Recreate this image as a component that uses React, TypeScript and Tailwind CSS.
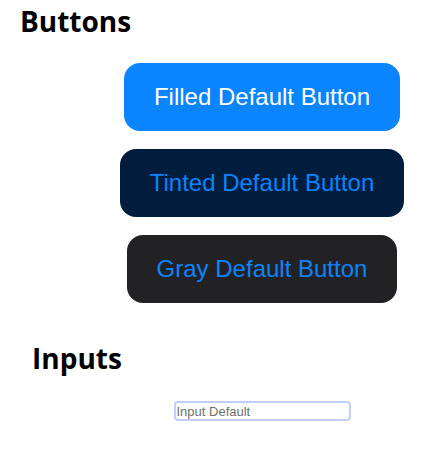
export default function App() {
  const heading = "font-bold text-[28px] leading-[34px] text-black [font-family:'Open_Sans',sans-serif]";
  const btn = "h-[68px] rounded-[16px] text-[24px] [font-family:'Liberation_Sans',Arial,sans-serif]";
  return (
    <div className="w-[440px] h-[469px] bg-white flex flex-col">
      <h1 className={`${heading} mt-[4px] pl-[20px]`}>Buttons</h1>
      <div className="flex flex-col items-center pl-[84px] mt-[25px] gap-[18px]">
        <button className={`${btn} w-[276px] bg-[#0a84ff] text-white`}>Filled Default Button</button>
        <button className={`${btn} w-[284px] bg-[#001d3d] text-[#0a84ff]`}>Tinted Default Button</button>
        <button className={`${btn} w-[270px] bg-[#222224] text-[#0a84ff]`}>Gray Default Button</button>
      </div>
      <h1 className={`${heading} mt-[38px] pl-[32px]`}>Inputs</h1>
      <div className="flex justify-center pl-[84px] mt-[26px]">
        <input
          className="w-[177px] h-[20px] rounded-[4px] border-2 border-[#c0cff7] px-[1px] text-[13px] text-gray-700 placeholder:text-[#6e6e6e] outline-none [font-family:'Liberation_Sans',Arial,sans-serif]"
          placeholder="Input Default"
        />
      </div>
    </div>
  );
}
